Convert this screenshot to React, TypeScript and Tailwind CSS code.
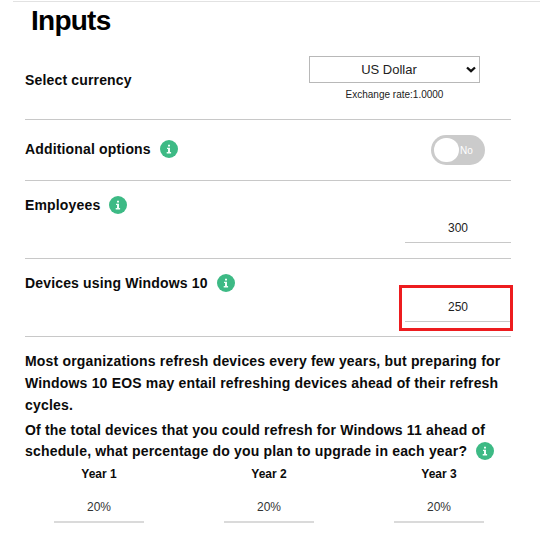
import React from "react";

function InfoIcon() {
  return (
    <svg className="block h-[18px] w-[18px] shrink-0" viewBox="0 0 18 18" role="img" aria-label="More information">
      <circle cx="9" cy="9" r="9" fill="#3dba85" />
      <path d="M8 4.7h2v1.8H8zM7 7.7h3v4.2h1.1v1.5H6.7v-1.5H8V9.1H7z" fill="#f1fff9" />
    </svg>
  );
}

function Label({ children, info = false }: { children: React.ReactNode; info?: boolean }) {
  return (
    <div className="flex h-[18px] items-center gap-[9px] whitespace-nowrap text-[14px] font-bold leading-[18px] tracking-[0.16px]">
      <span>{children}</span>
      {info && <InfoIcon />}
    </div>
  );
}

function YearColumn({ year }: { year: number }) {
  return (
    <div className="flex w-[90px] flex-col text-center text-[12px]">
      <div className="h-[16px] font-bold leading-[16px]">Year {year}</div>
      <div className="mt-[17px] h-[24px] border-b-2 border-[#dadada] leading-[16px] text-[#333]">20%</div>
    </div>
  );
}

export default function App() {
  return (
    <main className="h-[534px] w-[540px] overflow-hidden bg-white pt-px font-['Liberation_Sans',Arial,sans-serif] text-[#0b0b0b]">
      <div className="ml-[13px] h-px bg-[#e2e2e2]" />
      <div className="ml-[25px] w-[486px]">
        <h1 className="h-[38px] pl-[6px] text-[28px] font-bold leading-[37px] tracking-[-0.75px] text-black">Inputs</h1>

        <section className="flex h-[80px] justify-between border-b border-[#c8c8c8] pr-[31px]">
          <div className="pt-[31px]"><Label>Select currency</Label></div>
          <div className="w-[171px] pt-[16px] text-center">
            <div className="flex h-[27px] items-center border border-[#b8b8b8] pl-[2px] pr-[3px]">
              <span className="flex-1 text-[13px] leading-[18px] text-[#222]">US Dollar</span>
              <svg className="h-[8px] w-[10px]" viewBox="0 0 10 8" fill="none">
                <path d="m1 1.5 4 3.7 4-3.7" stroke="#111" strokeWidth="2.3" />
              </svg>
            </div>
            <div className="mt-[6px] text-[10px] leading-[12px] text-[#222]">Exchange rate:1.0000</div>
          </div>
        </section>

        <section className="flex h-[61px] justify-between border-b border-[#c8c8c8] pr-[26px]">
          <div className="pt-[20px]"><Label info>Additional options</Label></div>
          <div className="mt-[15px] flex h-[30px] w-[54px] items-center rounded-full bg-[#cbcbcb] pl-[3px]">
            <span className="h-[24px] w-[25px] rounded-full bg-white" />
            <span className="ml-px pt-[2px] text-[10px] leading-[12px] text-white">No</span>
          </div>
        </section>

        <section className="flex h-[78px] justify-between border-b border-[#c8c8c8]">
          <div className="pt-[15px]"><Label info>Employees</Label></div>
          <div className="mt-[39px] h-[23px] w-[106px] border-b border-[#c8c8c8] text-center text-[12px] leading-[16px] text-[#222]">300</div>
        </section>

        <section className="flex h-[78px] justify-between border-b border-[#c8c8c8]">
          <div className="pt-[15px]"><Label info>Devices using Windows 10</Label></div>
          <div className="-mr-[2px] mt-[26px] h-[46px] w-[114px] border-3 border-[#ed1c1f] pl-[3px] pt-[11px]">
            <div className="h-[23px] border-b border-[#c8c8c8] pl-px text-center text-[12px] leading-[16px] text-[#222]">250</div>
          </div>
        </section>

        <section className="whitespace-nowrap pt-[13px] text-[14px] font-bold tracking-[0.18px]">
          <p className="leading-[22px]">
            Most organizations refresh devices every few years, but preparing for<br />
            Windows 10 EOS may entail refreshing devices ahead of their refresh<br />
            cycles.
          </p>
          <p className="mt-[3px] leading-[22px]">Of the total devices that you could refresh for Windows 11 ahead of</p>
          <div className="flex h-[20px] items-center gap-[9px]">
            <span>schedule, what percentage do you plan to upgrade in each year?</span>
            <InfoIcon />
          </div>
        </section>
        <div className="ml-[29px] mt-[5px] flex gap-[80px]">
          <YearColumn year={1} />
          <YearColumn year={2} />
          <YearColumn year={3} />
        </div>
      </div>
    </main>
  );
}
